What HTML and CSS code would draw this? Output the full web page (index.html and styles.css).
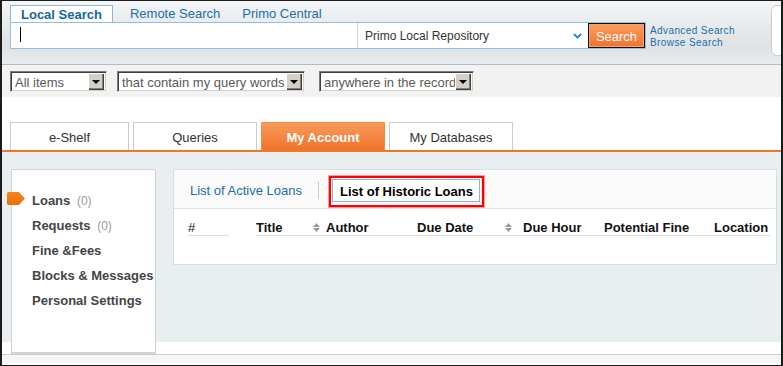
FILE: index.html
```html
<!DOCTYPE html>
<html lang="en">
<head>
    <meta charset="UTF-8">
    <title>My Account - Loans</title>
    <link rel="stylesheet" href="styles.css">
</head>
<body>
<div class="frame">
    <!-- 검색 영역 -->
    <div class="header">
        <div class="search">
            <div class="scopes">
                <span class="scope active">Local Search</span>
                <span class="scope first">Remote Search</span>
                <span class="scope">Primo Central</span>
            </div>
            <div class="searchbar">
                <div class="query"><span class="caret"></span></div>
                <div class="repo">
                    <span>Primo Local Repository</span>
                    <svg class="chev" width="9" height="6" viewBox="0 0 9 6"><path d="M1 1 L4.5 4.5 L8 1" fill="none" stroke="#2f8ccc" stroke-width="2"/></svg>
                </div>
                <button class="go">Search</button>
            </div>
        </div>
        <div class="links">
            <a href="#">Advanced Search</a>
            <a href="#">Browse Search</a>
        </div>
        <div class="stub"></div>
    </div>

    <div class="options">
        <div class="sel sel-type"><span>All items</span><i class="drop"></i></div>
        <div class="sel sel-prec"><span>that contain my query words</span><i class="drop"></i></div>
        <div class="sel sel-field"><span>anywhere in the record</span><i class="drop"></i></div>
    </div>

    <div class="tabs">
        <div class="tab first">e-Shelf</div>
        <div class="tab">Queries</div>
        <div class="tab active">My Account</div>
        <div class="tab">My Databases</div>
    </div>

    <div class="main">
        <div class="side">
            <span class="marker"></span>
            <div class="side-item">Loans <em>(0)</em></div>
            <div class="side-item">Requests <em>(0)</em></div>
            <div class="side-item">Fine &amp;Fees</div>
            <div class="side-item">Blocks &amp; Messages</div>
            <div class="side-item">Personal Settings</div>
        </div>
        <div class="panel">
            <div class="panel-bar">
                <a href="#" class="sub-link">List of Active Loans</a>
                <span class="sep"></span>
                <span class="sub-current">List of Historic Loans<span class="mark"></span></span>
            </div>
            <div class="panel-body">
                <div class="thead">
                    <div class="th th-num">#</div>
                    <div class="th-rest">
                        <div class="th th-title">Title</div>
                        <div class="th th-author"><svg class="sort" width="7" height="9" viewBox="0 0 7 9"><path d="M0 4 L3.5 0 L7 4 Z M0 5 L3.5 9 L7 5 Z" fill="#9a9a9a"/></svg>Author</div>
                        <div class="th th-date">Due Date</div>
                        <div class="th th-hour"><svg class="sort wide" width="7" height="9" viewBox="0 0 7 9"><path d="M0 4 L3.5 0 L7 4 Z M0 5 L3.5 9 L7 5 Z" fill="#9a9a9a"/></svg>Due Hour</div>
                        <div class="th th-fine">Potential Fine</div>
                        <div class="th th-loc">Location</div>
                    </div>
                </div>
            </div>
        </div>
    </div>
    <div class="foot"></div>
</div>
</body>
</html>
```

FILE: styles.css
```css
/* 기본 */
body {
    margin: 0;
    font-family: "Liberation Sans", Arial, sans-serif;
    font-size: 13px;
    color: #333;
}
a {
    text-decoration: none;
}
.frame {
    width: 783px;
    height: 366px;
    box-sizing: border-box;
    border: 1px solid #1c1c1c;
    border-left-width: 2px;
    border-right-width: 2px;
    overflow: hidden;
    background: #fff;
}

/* 검색 헤더 */
.header {
    display: flex;
    align-items: flex-start;
    height: 64px;
    box-sizing: border-box;
    padding: 4px 0 0 8px;
    border-bottom: 1px solid #b4bbc1;
    background: linear-gradient(#f3f5f7, #e3e7ea 55%, #dfe3e6 75%, #e9ecef);
}
.scopes {
    display: flex;
    height: 17px;
    line-height: 18px;
}
.scope {
    padding: 0 11px;
    color: #1b6ea8;
}
.scope.first {
    margin-left: 6px;
}
.scope.active {
    padding: 0 10px;
    font-weight: bold;
    background: #fff;
    border: 1px solid #8db7d3;
    border-bottom: none;
    color: #15679f;
}
.searchbar {
    display: flex;
    height: 27px;
    box-sizing: border-box;
    border: 1px solid #96bfd9;
    background: #fff;
}
.query {
    width: 346px;
    padding: 4px 0 0 9px;
    box-sizing: border-box;
}
.caret {
    display: block;
    width: 1px;
    height: 15px;
    background: #000;
}
.repo {
    width: 231px;
    display: flex;
    align-items: center;
    box-sizing: border-box;
    padding: 1px 6px 0 7px;
    border-left: 1px solid #c9d6df;
    font-size: 12px;
    color: #333;
}
.repo span {
    flex: 1;
}
.go {
    width: 57px;
    height: 25px;
    margin: 0;
    padding: 1px 0 0;
    border: 1px solid #111;
    background: linear-gradient(#fa9d60, #f07429);
    box-shadow: inset 0 0 0 1px #f9a36a;
    color: #fff;
    font-family: inherit;
    font-size: 13px;
}
.links {
    display: flex;
    flex-direction: column;
    margin: 20px 0 0 4px;
    font-size: 10px;
    line-height: 12px;
    letter-spacing: 0.4px;
}
.links a {
    color: #1b6ea8;
}
.stub {
    margin-left: auto;
    margin-right: -20px;
    width: 30px;
    height: 51px;
    box-sizing: border-box;
    border: 1px solid #ccc;
    border-radius: 6px;
    background: #fff;
}

/* 검색 옵션 */
.options {
    display: flex;
    gap: 10px;
    height: 32px;
    box-sizing: border-box;
    padding: 6px 0 0 8px;
    background: #f2f2f2;
}
.sel {
    display: flex;
    align-items: center;
    height: 21px;
    box-sizing: border-box;
    padding: 0 2px 0 4px;
    border: 1px solid;
    border-color: #7a7a7a #f4f4f4 #f4f4f4 #7a7a7a;
    box-shadow: inset 1px 1px #404040, inset -1px -1px #d4d0c8;
    background: #fff;
    color: #5a5a5a;
}
.sel span {
    flex: 1;
    padding-top: 2px;
    white-space: nowrap;
    overflow: hidden;
}
.sel-type { width: 97px; }
.sel-prec { width: 188px; }
.sel-field { width: 155px; margin-left: 4px; }
.drop {
    position: relative;
    width: 16px;
    height: 17px;
    background: #d4d0c8;
    box-shadow: inset 1px 1px #fff, inset -1px -1px #404040, inset -2px -2px #808080;
}
.drop::after {
    content: "";
    position: absolute;
    left: 4px;
    top: 7px;
    border-left: 4px solid transparent;
    border-right: 4px solid transparent;
    border-top: 4px solid #000;
}

/* 메뉴 탭 */
.tabs {
    display: flex;
    gap: 4px;
    height: 55px;
    box-sizing: border-box;
    padding: 25px 0 0 8px;
    border-bottom: 2px solid #f07828;
}
.tab {
    width: 124px;
    height: 28px;
    box-sizing: border-box;
    padding-top: 2px;
    border: 1px solid #cbcbcb;
    border-bottom: none;
    text-align: center;
    line-height: 26px;
    color: #333;
}
.tab.first {
    width: 119px;
}
.tab.active {
    border-color: #f28a4a;
    background: linear-gradient(#f99a5c, #f07328);
    color: #fff;
    font-weight: bold;
}

/* 본문 */
.main {
    display: flex;
    align-items: flex-start;
    height: 203px;
    box-sizing: border-box;
    padding: 17px 0 0 9px;
    border-bottom: 1px solid #cdcdcd;
    background: linear-gradient(#e9eef1 0 190px, #fff 190px);
}
.side {
    position: relative;
    width: 145px;
    height: 185px;
    box-sizing: border-box;
    padding: 18px 0 0 20px;
    border: 1px solid #d2d2d2;
    border-bottom-width: 2px;
    background: #fff;
}
.marker {
    position: absolute;
    left: -5px;
    top: 22px;
    width: 18px;
    height: 13px;
    background: linear-gradient(#f5861f, #ec6d08);
    clip-path: polygon(0 8%, 6% 0, 66% 0, 100% 50%, 66% 100%, 6% 100%, 0 92%);
}
.side-item {
    height: 25px;
    line-height: 25px;
    font-size: 13px;
    font-weight: bold;
    color: #454545;
    white-space: nowrap;
}
.side-item em {
    font-style: normal;
    font-weight: normal;
    font-size: 12px;
    line-height: 1;
    color: #9a9a9a;
    margin-left: 3px;
}
.panel {
    width: 604px;
    height: 96px;
    margin-left: 17px;
    box-sizing: border-box;
    border: 1px solid #d9dee3;
    background: #fff;
}
.panel-bar {
    display: flex;
    align-items: center;
    height: 39px;
    box-sizing: border-box;
    padding: 2px 0 0 16px;
    border-bottom: 1px solid #dde2e6;
    background: #fafafa;
}
.sub-link {
    color: #1b6ea8;
}
.sep {
    width: 1px;
    height: 18px;
    margin: 0 13px 0 16px;
    background: #cfcfcf;
}
.sub-current {
    position: relative;
    height: 23px;
    line-height: 23px;
    box-sizing: border-box;
    padding: 0 6px 0 7px;
    border: 1px solid #8fb4c9;
    background: #fff;
    font-weight: bold;
    color: #000;
}
/* 강조 표시 */
.mark {
    position: absolute;
    top: -4px;
    left: -4px;
    right: -5px;
    bottom: -6px;
    border: 2px solid #f00;
    box-shadow: 0 0 0 1px rgba(255, 40, 40, 0.45);
}
.thead {
    display: flex;
    padding: 10px 0 0 14px;
}
.th {
    display: flex;
    align-items: center;
    height: 16px;
    line-height: 15px;
    font-weight: bold;
    color: #111;
    white-space: nowrap;
}
.th-num {
    width: 41px;
    margin-right: 27px;
    border-bottom: 1px solid #dcdcdc;
    font-weight: normal;
}
.th-rest {
    display: flex;
    border-bottom: 1px solid #dcdcdc;
}
.th-title { width: 57px; }
.th-author { width: 104px; }
.th-date { width: 88px; }
.th-hour { width: 99px; }
.th-fine { width: 110px; }
.th-loc { width: 56px; }
.sort {
    margin-right: 6px;
}
.sort.wide {
    margin-right: 11px;
}
.foot {
    height: 8px;
    background: #f5f5f5;
}
```
